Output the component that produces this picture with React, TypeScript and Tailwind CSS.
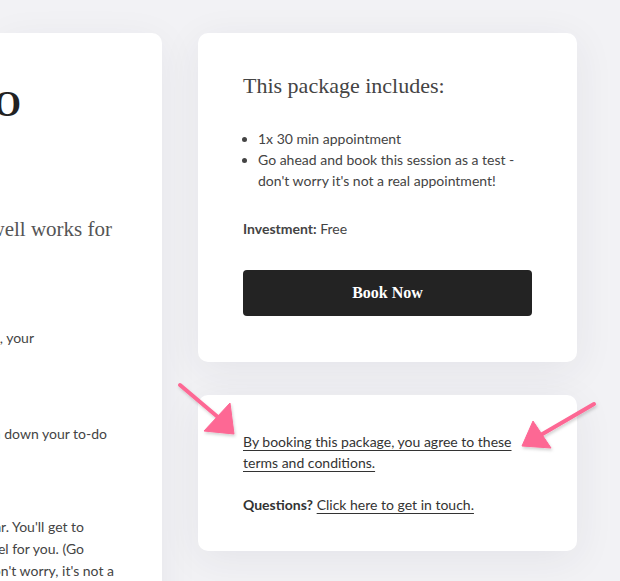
const serif = { fontFamily: '"Liberation Serif", "DejaVu Serif", Georgia, serif' };

function CutLine({ text, end, className }: { text: string; end: number; className: string }) {
  // the left card is scrolled off screen; each line only shows its tail
  return (
    <div className={`flex justify-end ${className}`} style={{ paddingRight: 162 - end }}>
      <span className="shrink-0 whitespace-nowrap">{text}</span>
    </div>
  );
}

function Arrows() {
  return (
    <svg className="pointer-events-none absolute inset-0" width="620" height="581" viewBox="0 0 620 581">
      <defs>
        <filter id="sh" x="-20%" y="-20%" width="140%" height="140%">
          <feDropShadow dx="1" dy="2" stdDeviation="1.5" floodColor="#000" floodOpacity="0.18" />
        </filter>
      </defs>
      <g fill="#fd6794" stroke="#fd6794" filter="url(#sh)">
        <line x1="180" y1="385" x2="219" y2="418" strokeWidth="4" strokeLinecap="round" />
        <polygon points="204,431 230,403 234,434" strokeWidth="1" strokeLinejoin="round" />
        <line x1="594" y1="404" x2="539" y2="436" strokeWidth="4" strokeLinecap="round" />
        <polygon points="533,421 551,448 522,446" strokeWidth="1" strokeLinejoin="round" />
      </g>
    </svg>
  );
}

export default function App() {
  return (
    <div
      className="relative h-[581px] w-[620px] overflow-hidden bg-[#f2f2f5]"
      style={{ fontFamily: 'Lato, "Open Sans", sans-serif' }}
    >
      <div className="flex items-start gap-9 pt-[33px]">
        {/* left description card, mostly out of view */}
        <div className="h-[600px] w-[162px] shrink-0 overflow-hidden rounded-tr-[10px] bg-white shadow-[0_8px_40px_rgba(40,40,70,0.06)]">
          <div className="pt-[50px]" style={serif}>
            <CutLine text="Test Session DEMO" end={21} className="text-[35px] font-semibold leading-[44px] text-[#222]" />
          </div>
          <div className="mt-[88px]" style={serif}>
            <CutLine text="See how a session with us as well works for" end={112} className="text-[21px] leading-[28px] text-[#555]" />
          </div>
          <div className="mt-[84px] text-[14px] leading-[22px] text-[#444]">
            <CutLine text="Choose a time that suits you, your" end={34} className="" />
          </div>
          <div className="mt-[74px] text-[14px] leading-[22px] text-[#444]">
            <CutLine text="We'll talk through and pin down your to-do" end={107} className="" />
          </div>
          <div className="mt-[71px] text-[14px] leading-[22px] text-[#444]">
            <CutLine text="Book your time slot in the calendar. You'll get to" end={84} className="" />
            <CutLine text="see how the whole process will feel for you. (Go" end={84} className="" />
            <CutLine text="ahead and book this session - don't worry, it's not a" end={114} className="" />
          </div>
        </div>

        <div className="flex w-[379px] shrink-0 flex-col gap-[33px]">
          <div className="rounded-[10px] bg-white px-[45px] pb-[46px] pt-[40px] shadow-[0_8px_40px_rgba(40,40,70,0.07)]">
            <h2 className="text-[22px] leading-[26px] text-[#444]" style={serif}>
              This package includes:
            </h2>
            <ul className="mt-[29px] list-disc pl-[15px] text-[14px] leading-[21px] text-[#444]">
              <li>1x 30 min appointment</li>
              <li>Go ahead and book this session as a test - don't worry it's not a real appointment!</li>
            </ul>
            <p className="mt-[27px] text-[14px] leading-[21px] text-[#444]">
              <span className="font-bold">Investment:</span> Free
            </p>
            <button
              className="mt-[31px] flex h-[46px] w-full items-center justify-center rounded-[4px] bg-[#232323] text-[16px] font-bold text-white"
              style={serif}
            >
              Book Now
            </button>
          </div>

          <div className="rounded-[10px] bg-white px-[45px] pb-[36px] pt-[36px] text-[14px] leading-[21px] text-[#333] shadow-[0_8px_40px_rgba(40,40,70,0.07)]">
            <p>
              <a className="underline underline-offset-[3px]">By booking this package, you agree to these terms and conditions.</a>
            </p>
            <p className="mt-[21px]">
              <span className="font-bold">Questions?</span>{' '}
              <a className="underline underline-offset-[3px]">Click here to get in touch.</a>
            </p>
          </div>
        </div>
      </div>
      <Arrows />
    </div>
  );
}
